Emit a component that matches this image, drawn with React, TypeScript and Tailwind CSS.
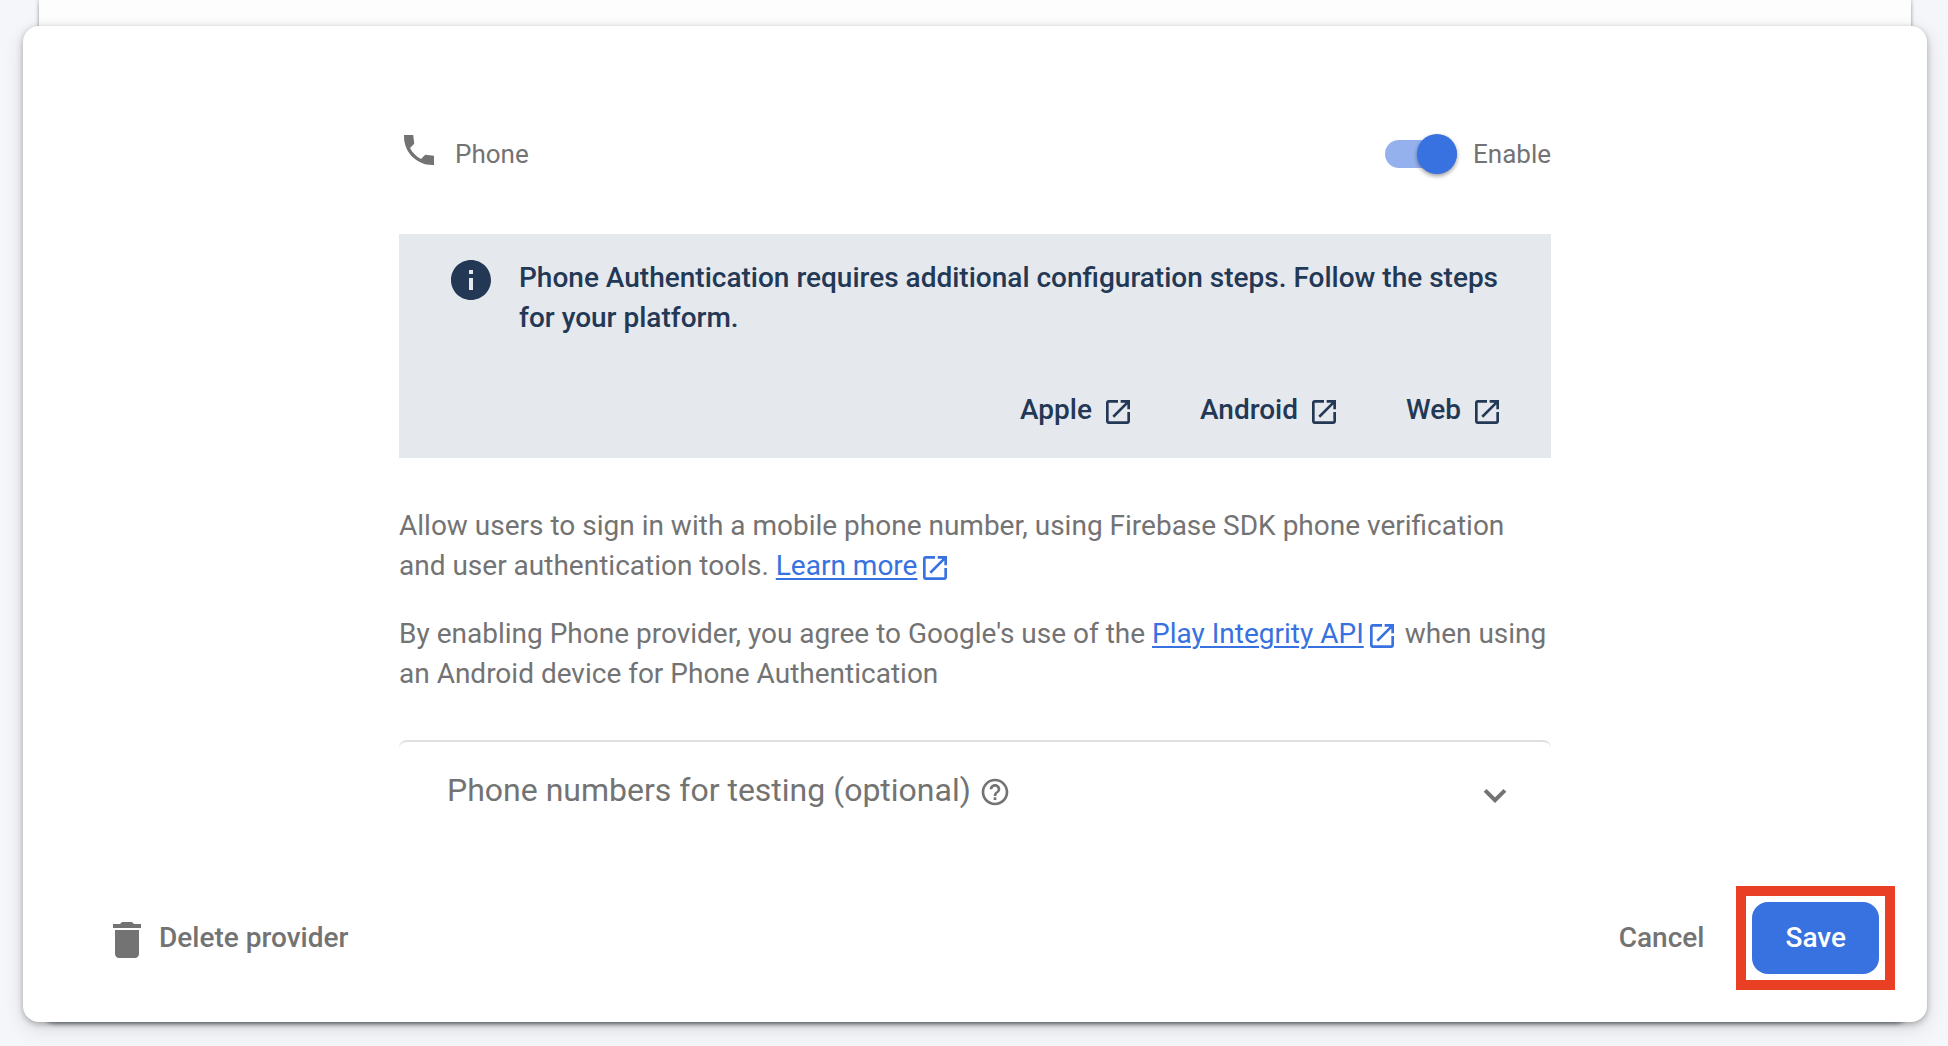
import React, { useState } from "react";
import type { ReactNode } from "react";

function Icon({ d, className }: { d: string; className: string }) {
  return (
    <svg viewBox="0 0 24 24" fill="currentColor" aria-hidden="true" className={className}>
      <path d={d} />
    </svg>
  );
}

const PHONE =
  "M21 15.46l-5.27-.61-2.52 2.52c-2.83-1.44-5.15-3.75-6.59-6.59l2.53-2.53L8.54 3H3.03C2.45 13.18 10.82 21.55 21 20.97v-5.51z";
const INFO = "M12 2C6.48 2 2 6.48 2 12s4.48 10 10 10 10-4.48 10-10S17.52 2 12 2zm1 15h-2v-6h2v6zm0-8h-2V7h2v2z";
const OPEN =
  "M19 19H5V5h7V3H5c-1.11 0-2 .9-2 2v14c0 1.1.89 2 2 2h14c1.1 0 2-.9 2-2v-7h-2v7zM14 3v2h3.59l-9.83 9.83 1.41 1.41L19 6.41V10h2V3h-7z";
const TRASH = "M6 19c0 1.1.9 2 2 2h8c1.1 0 2-.9 2-2V7H6v12zM19 4h-3.5l-1-1h-5l-1 1H5v2h14V4z";
const HELP =
  "M11 18h2v-2h-2v2zm1-16C6.48 2 2 6.48 2 12s4.48 10 10 10 10-4.48 10-10S17.52 2 12 2zm0 18c-4.41 0-8-3.59-8-8s3.59-8 8-8 8 3.59 8 8-3.59 8-8 8zm0-14c-2.21 0-4 1.79-4 4h2c0-1.1.9-2 2-2s2 .9 2 2c0 2-3 1.75-3 5h2c0-2.25 3-2.5 3-5 0-2.21-1.79-4-4-4z";

function InlineLink({ children }: { children: ReactNode }) {
  return (
    <a href="#" className="whitespace-nowrap text-[#3871e0]">
      <span className="underline decoration-2 underline-offset-3">{children}</span>
      <Icon d={OPEN} className="ml-0.5 inline-block size-8 align-[-9px]" />
    </a>
  );
}

function PlatformLink({ children }: { children: ReactNode }) {
  return (
    <a href="#" className="flex items-center gap-2.5">
      {children}
      <Icon d={OPEN} className="mt-1 size-8" />
    </a>
  );
}

export default function App() {
  const [enabled, setEnabled] = useState(true);
  return (
    <main className="min-h-screen bg-[#f5f6f9] pr-[37px] pb-6 pl-[39px] font-['Roboto',sans-serif] text-[28px] leading-10 text-[#737373]">
      <div className="rounded-b-2xl bg-[#fdfdfd] pt-[26px] shadow-[0_4px_4px_-2px_rgba(38,50,56,0.4),0_0_4px_rgba(38,50,56,0.4)]">
        <section className="-mx-4 flex flex-col rounded-2xl bg-white pt-25 pb-12 shadow-[0_2px_6px_rgba(0,0,0,0.28),0_6px_20px_rgba(0,0,0,0.12)]">
          <div className="mx-auto w-full max-w-[1152px]">
            <header className="flex items-center justify-between text-[26px]">
              <div className="flex items-center gap-4">
                <Icon d={PHONE} className="size-10" />
                <h1 className="mt-2">Phone</h1>
              </div>
              <label className="mt-2 flex cursor-pointer items-center gap-4">
                <span className="relative flex h-7 w-[72px] items-center">
                  <input
                    type="checkbox"
                    role="switch"
                    checked={enabled}
                    onChange={(e) => setEnabled(e.target.checked)}
                    className="peer h-7 w-full cursor-pointer appearance-none rounded-full bg-gray-300 checked:bg-[#94b1ee]"
                  />
                  <span className="pointer-events-none absolute left-0 size-10 rounded-full bg-white shadow-[0_2px_4px_rgba(0,0,0,0.4)] peer-checked:left-8 peer-checked:bg-[#3871e0]" />
                </span>
                Enable
              </label>
            </header>

            <div className="mt-15 bg-[#e5e8ed] px-12 pt-[22px] pb-7 font-medium text-[#233855]">
              <div className="flex gap-6">
                <Icon d={INFO} className="size-12 shrink-0" />
                <p className="pt-0.5">
                  Phone Authentication requires additional configuration steps. Follow the steps for your platform.
                </p>
              </div>
              <nav className="mt-13 flex justify-end gap-[66px]">
                <PlatformLink>Apple</PlatformLink>
                <PlatformLink>Android</PlatformLink>
                <PlatformLink>Web</PlatformLink>
              </nav>
            </div>

            <p className="mt-12">
              Allow users to sign in with a mobile phone number, using Firebase SDK phone verification and user
              authentication tools. <InlineLink>Learn more</InlineLink>
            </p>
            <p className="mt-7">
              By enabling Phone provider, you agree to Google's use of the <InlineLink>Play Integrity API</InlineLink>{" "}
              when using an Android device for Phone Authentication
            </p>

            <button
              type="button"
              className="mt-[46px] flex w-full items-center justify-between rounded-t-lg border-t-2 border-[#e0e0e0] pt-7 pr-11 pb-5 pl-12 text-[32px] leading-10"
            >
              <span className="flex items-center gap-2">
                Phone numbers for testing (optional)
                <Icon d={HELP} className="mt-1 size-8" />
              </span>
              <svg viewBox="0 0 24 16" aria-hidden="true" className="mt-3 h-4 w-6">
                <path d="M2.1 2.3 12 12.2l9.9-9.9" fill="none" stroke="currentColor" strokeWidth="4" />
              </svg>
            </button>
          </div>

          <footer className="mt-18 flex items-center justify-between px-12 font-medium">
            <button type="button" className="ml-8 flex items-center gap-2">
              <Icon d={TRASH} className="mt-1 size-12" />
              Delete provider
            </button>
            <div className="flex items-center gap-4">
              <button type="button" className="px-8">
                Cancel
              </button>
              <div className="relative">
                <button type="button" className="h-[72px] rounded-2xl bg-[#3871e0] px-[33px] text-white">
                  Save
                </button>
                <span className="pointer-events-none absolute -inset-4 border-10 border-[#e94025]" />
              </div>
            </div>
          </footer>
        </section>
      </div>
    </main>
  );
}
